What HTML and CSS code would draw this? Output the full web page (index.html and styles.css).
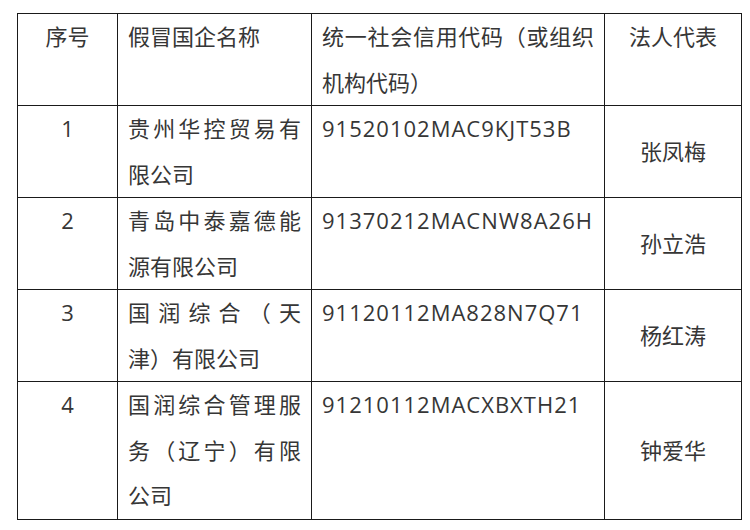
FILE: index.html
```html
<!DOCTYPE html>
<html lang="zh-CN">
<head>
<meta charset="utf-8">
<title>假冒国企名单</title>
<link rel="stylesheet" href="styles.css">
</head>
<body>
<table class="list">
  <colgroup>
    <col class="c-no">
    <col class="c-name">
    <col class="c-code">
    <col class="c-rep">
  </colgroup>
  <tr>
    <td class="no">序号</td>
    <td class="name">假冒国企名称</td>
    <td class="code">统一社会信用代码（或组织机构代码）</td>
    <td class="rep top">法人代表</td>
  </tr>
  <tr>
    <td class="no">1</td>
    <td class="name">贵州华控贸易有限公司</td>
    <td class="code num">91520102MAC9KJT53B</td>
    <td class="rep">张凤梅</td>
  </tr>
  <tr>
    <td class="no">2</td>
    <td class="name">青岛中泰嘉德能源有限公司</td>
    <td class="code num">91370212MACNW8A26H</td>
    <td class="rep">孙立浩</td>
  </tr>
  <tr>
    <td class="no">3</td>
    <td class="name">国润综合（天津）有限公司</td>
    <td class="code num">91120112MA828N7Q71</td>
    <td class="rep">杨红涛</td>
  </tr>
  <tr>
    <td class="no">4</td>
    <td class="name">国润综合管理服务（辽宁）有限公司</td>
    <td class="code num">91210112MACXBXTH21</td>
    <td class="rep">钟爱华</td>
  </tr>
</table>
</body>
</html>
```

FILE: styles.css
```css
html, body {
  margin: 0;
  background: #ffffff;
}
body {
  padding: 13px 0 0 17px;
  font-family: "Open Sans", "Noto Sans CJK SC", sans-serif;
  font-size: 22px;
  color: #363636;
}
.list {
  border-collapse: collapse;
  table-layout: fixed;
  width: 724px;
}
.c-no { width: 100px; }
.c-name { width: 194px; }
.c-code { width: 293px; }
.c-rep { width: 137px; }
.list td {
  border: 1.5px solid #1a1a1a;
  line-height: 45.5px;
  padding: 0 10px 0 10px;
  vertical-align: top;
  text-align: justify;
  text-spacing-trim: space-all;
}
.list td.num {
  letter-spacing: 1px;
}
.list td.no {
  text-align: center;
}
.list td.rep {
  text-align: center;
  vertical-align: middle;
}
.list td.rep.top {
  vertical-align: top;
}
```
